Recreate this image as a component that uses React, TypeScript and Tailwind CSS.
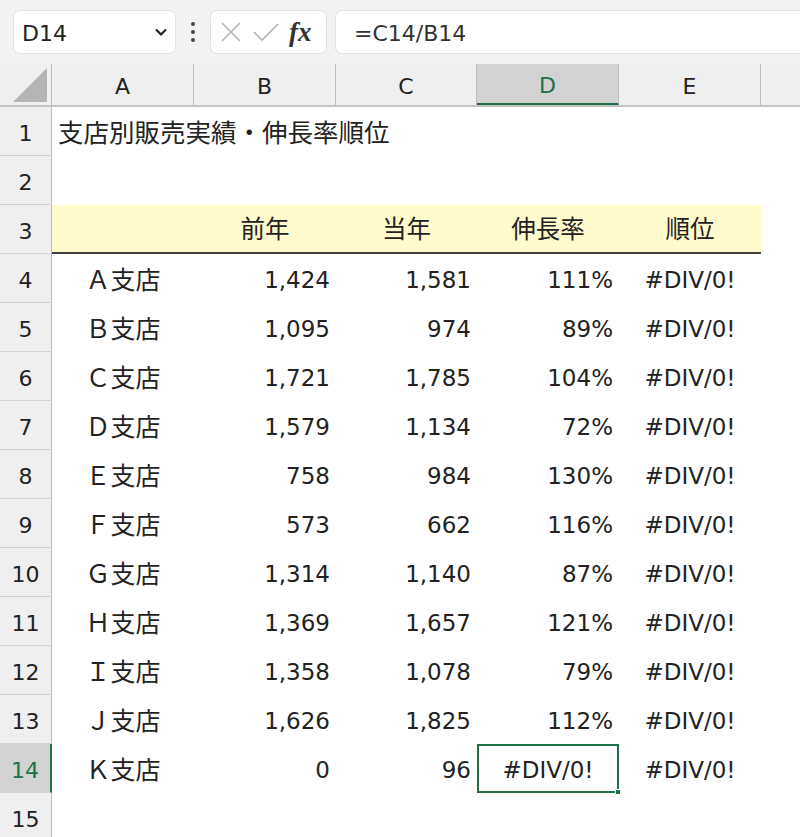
import React from "react";

const rows: [string, string, string, string, string][] = [
  ["Ａ支店", "1,424", "1,581", "111%", "#DIV/0!"],
  ["Ｂ支店", "1,095", "974", "89%", "#DIV/0!"],
  ["Ｃ支店", "1,721", "1,785", "104%", "#DIV/0!"],
  ["Ｄ支店", "1,579", "1,134", "72%", "#DIV/0!"],
  ["Ｅ支店", "758", "984", "130%", "#DIV/0!"],
  ["Ｆ支店", "573", "662", "116%", "#DIV/0!"],
  ["Ｇ支店", "1,314", "1,140", "87%", "#DIV/0!"],
  ["Ｈ支店", "1,369", "1,657", "121%", "#DIV/0!"],
  ["Ｉ支店", "1,358", "1,078", "79%", "#DIV/0!"],
  ["Ｊ支店", "1,626", "1,825", "112%", "#DIV/0!"],
  ["Ｋ支店", "0", "96", "#DIV/0!", "#DIV/0!"],
];

const LAT = "pt-[4px] font-['DejaVu_Sans','Noto_Sans_CJK_JP',sans-serif]";

function RowHead({ n, active }: { n: number; active?: boolean }) {
  return (
    <div
      className={
        "w-[52px] shrink-0 flex items-center justify-center pt-[4px] text-[22px] border-b border-[#d4d4d4] font-['DejaVu_Sans',sans-serif] " +
        (active
          ? "bg-[#d2d2d2] text-[#1e7145] border-r-2 border-r-[#1e7145]"
          : "bg-[#efefef] text-[#222] border-r border-r-[#bdbdbd]")
      }
    >
      {n}
    </div>
  );
}

export default function App() {
  return (
    <div className="w-[800px] h-[837px] overflow-hidden bg-white text-[#222] font-['Noto_Sans_CJK_JP',sans-serif]">
      {/* Toolbar */}
      <div className="h-[64px] bg-[#f3f3f3] flex items-center pl-[13px]">
        <div className="w-[163px] h-[44px] bg-white border border-[#e0e0e0] rounded-[7px] flex items-center pl-[8px] pr-[6px] justify-between">
          <span className="pt-[3px] text-[22px] text-[#222] font-['DejaVu_Sans',sans-serif]">D14</span>
          <svg width="16" height="16" viewBox="0 0 16 16">
            <path d="M3 5.5 L8 10.5 L13 5.5" fill="none" stroke="#222" strokeWidth="2.2" />
          </svg>
        </div>
        <div className="w-[34px] flex flex-col items-center gap-[4px]">
          <span className="w-[4px] h-[4px] rounded-full bg-[#444]" />
          <span className="w-[4px] h-[4px] rounded-full bg-[#444]" />
          <span className="w-[4px] h-[4px] rounded-full bg-[#444]" />
        </div>
        <div className="w-[117px] h-[44px] bg-white border border-[#e0e0e0] rounded-[7px] flex items-center pl-[8px] gap-[8px]">
          <svg width="24" height="24" viewBox="0 0 24 24">
            <path d="M3 3 L21 21 M21 3 L3 21" stroke="#b4b4b4" strokeWidth="1.6" fill="none" />
          </svg>
          <svg width="30" height="24" viewBox="0 0 30 24">
            <path d="M3 12 L11 20 L27 4" stroke="#b4b4b4" strokeWidth="1.6" fill="none" />
          </svg>
          <span className="text-[27px] italic font-bold text-[#333] leading-none font-['Liberation_Serif',serif]">
            fx
          </span>
        </div>
        <div className="ml-[8px] flex-1 h-[44px] bg-white border border-[#e0e0e0] border-r-0 rounded-l-[7px] flex items-center pl-[18px]">
          <span className="pt-[3px] text-[22px] text-[#333] font-['DejaVu_Sans',sans-serif]">=C14/B14</span>
        </div>
      </div>

      {/* Column headers */}
      <div className="flex h-[43px] bg-[#efefef] border-b-2 border-[#c4c4c4]">
        <div className="w-[52px] shrink-0 relative border-r border-[#bdbdbd]">
          <svg className="absolute right-[4px] bottom-[3px]" width="34" height="34" viewBox="0 0 34 34">
            <polygon points="34,0 34,34 0,34" fill="#b4b4b4" />
          </svg>
        </div>
        {["A", "B", "C", "D", "E"].map((c) => (
          <div
            key={c}
            className={
              "shrink-0 flex items-center justify-center pt-[3px] text-[22px] border-r border-[#bdbdbd] font-['DejaVu_Sans',sans-serif] " +
              (c === "C" ? "w-[141px] " : "w-[142px] ") +
              (c === "D" ? "bg-[#d2d2d2] text-[#1e7145] border-b-2 border-b-[#1e7145]" : "text-[#222]")
            }
          >
            {c}
          </div>
        ))}
        <div className="flex-1" />
      </div>

      {/* Row 1 */}
      <div className="flex h-[49px]">
        <RowHead n={1} />
        <div className="flex items-center pl-[6px] text-[25.5px] whitespace-nowrap">支店別販売実績・伸長率順位</div>
      </div>
      {/* Row 2 */}
      <div className="flex h-[49px]">
        <RowHead n={2} />
      </div>
      {/* Row 3 header */}
      <div className="flex h-[49px]">
        <RowHead n={3} />
        <div className="flex bg-[#fffbcc] border-b-2 border-[#404040] text-[24.5px]">
          <div className="w-[142px]" />
          <div className="w-[142px] flex items-center justify-center">前年</div>
          <div className="w-[141px] flex items-center justify-center">当年</div>
          <div className="w-[142px] flex items-center justify-center">伸長率</div>
          <div className="w-[142px] flex items-center justify-center">順位</div>
        </div>
      </div>
      {rows.map((r, idx) => {
        const n = idx + 4;
        const active = n === 14;
        return (
          <div key={n} className="flex h-[49px] text-[23px]">
            <RowHead n={n} active={active} />
            <div className="w-[142px] flex items-center justify-center text-[25px]">{r[0]}</div>
            <div className={"w-[142px] flex items-center justify-end pr-[6px] " + LAT}>{r[1]}</div>
            <div className={"w-[141px] flex items-center justify-end pr-[6px] " + LAT}>{r[2]}</div>
            {active ? (
              <div className={"w-[142px] relative flex items-center justify-center border-2 border-[#1e7145] " + LAT}>
                {r[3]}
                <span className="absolute right-[-4px] bottom-[-4px] w-[6px] h-[6px] bg-[#1e7145] border border-white" />
              </div>
            ) : (
              <div className={"w-[142px] flex items-center justify-end pr-[6px] " + LAT}>{r[3]}</div>
            )}
            <div className={"w-[142px] flex items-center justify-center " + LAT}>{r[4]}</div>
          </div>
        );
      })}
      <div className="flex h-[49px]">
        <RowHead n={15} />
      </div>
    </div>
  );
}
